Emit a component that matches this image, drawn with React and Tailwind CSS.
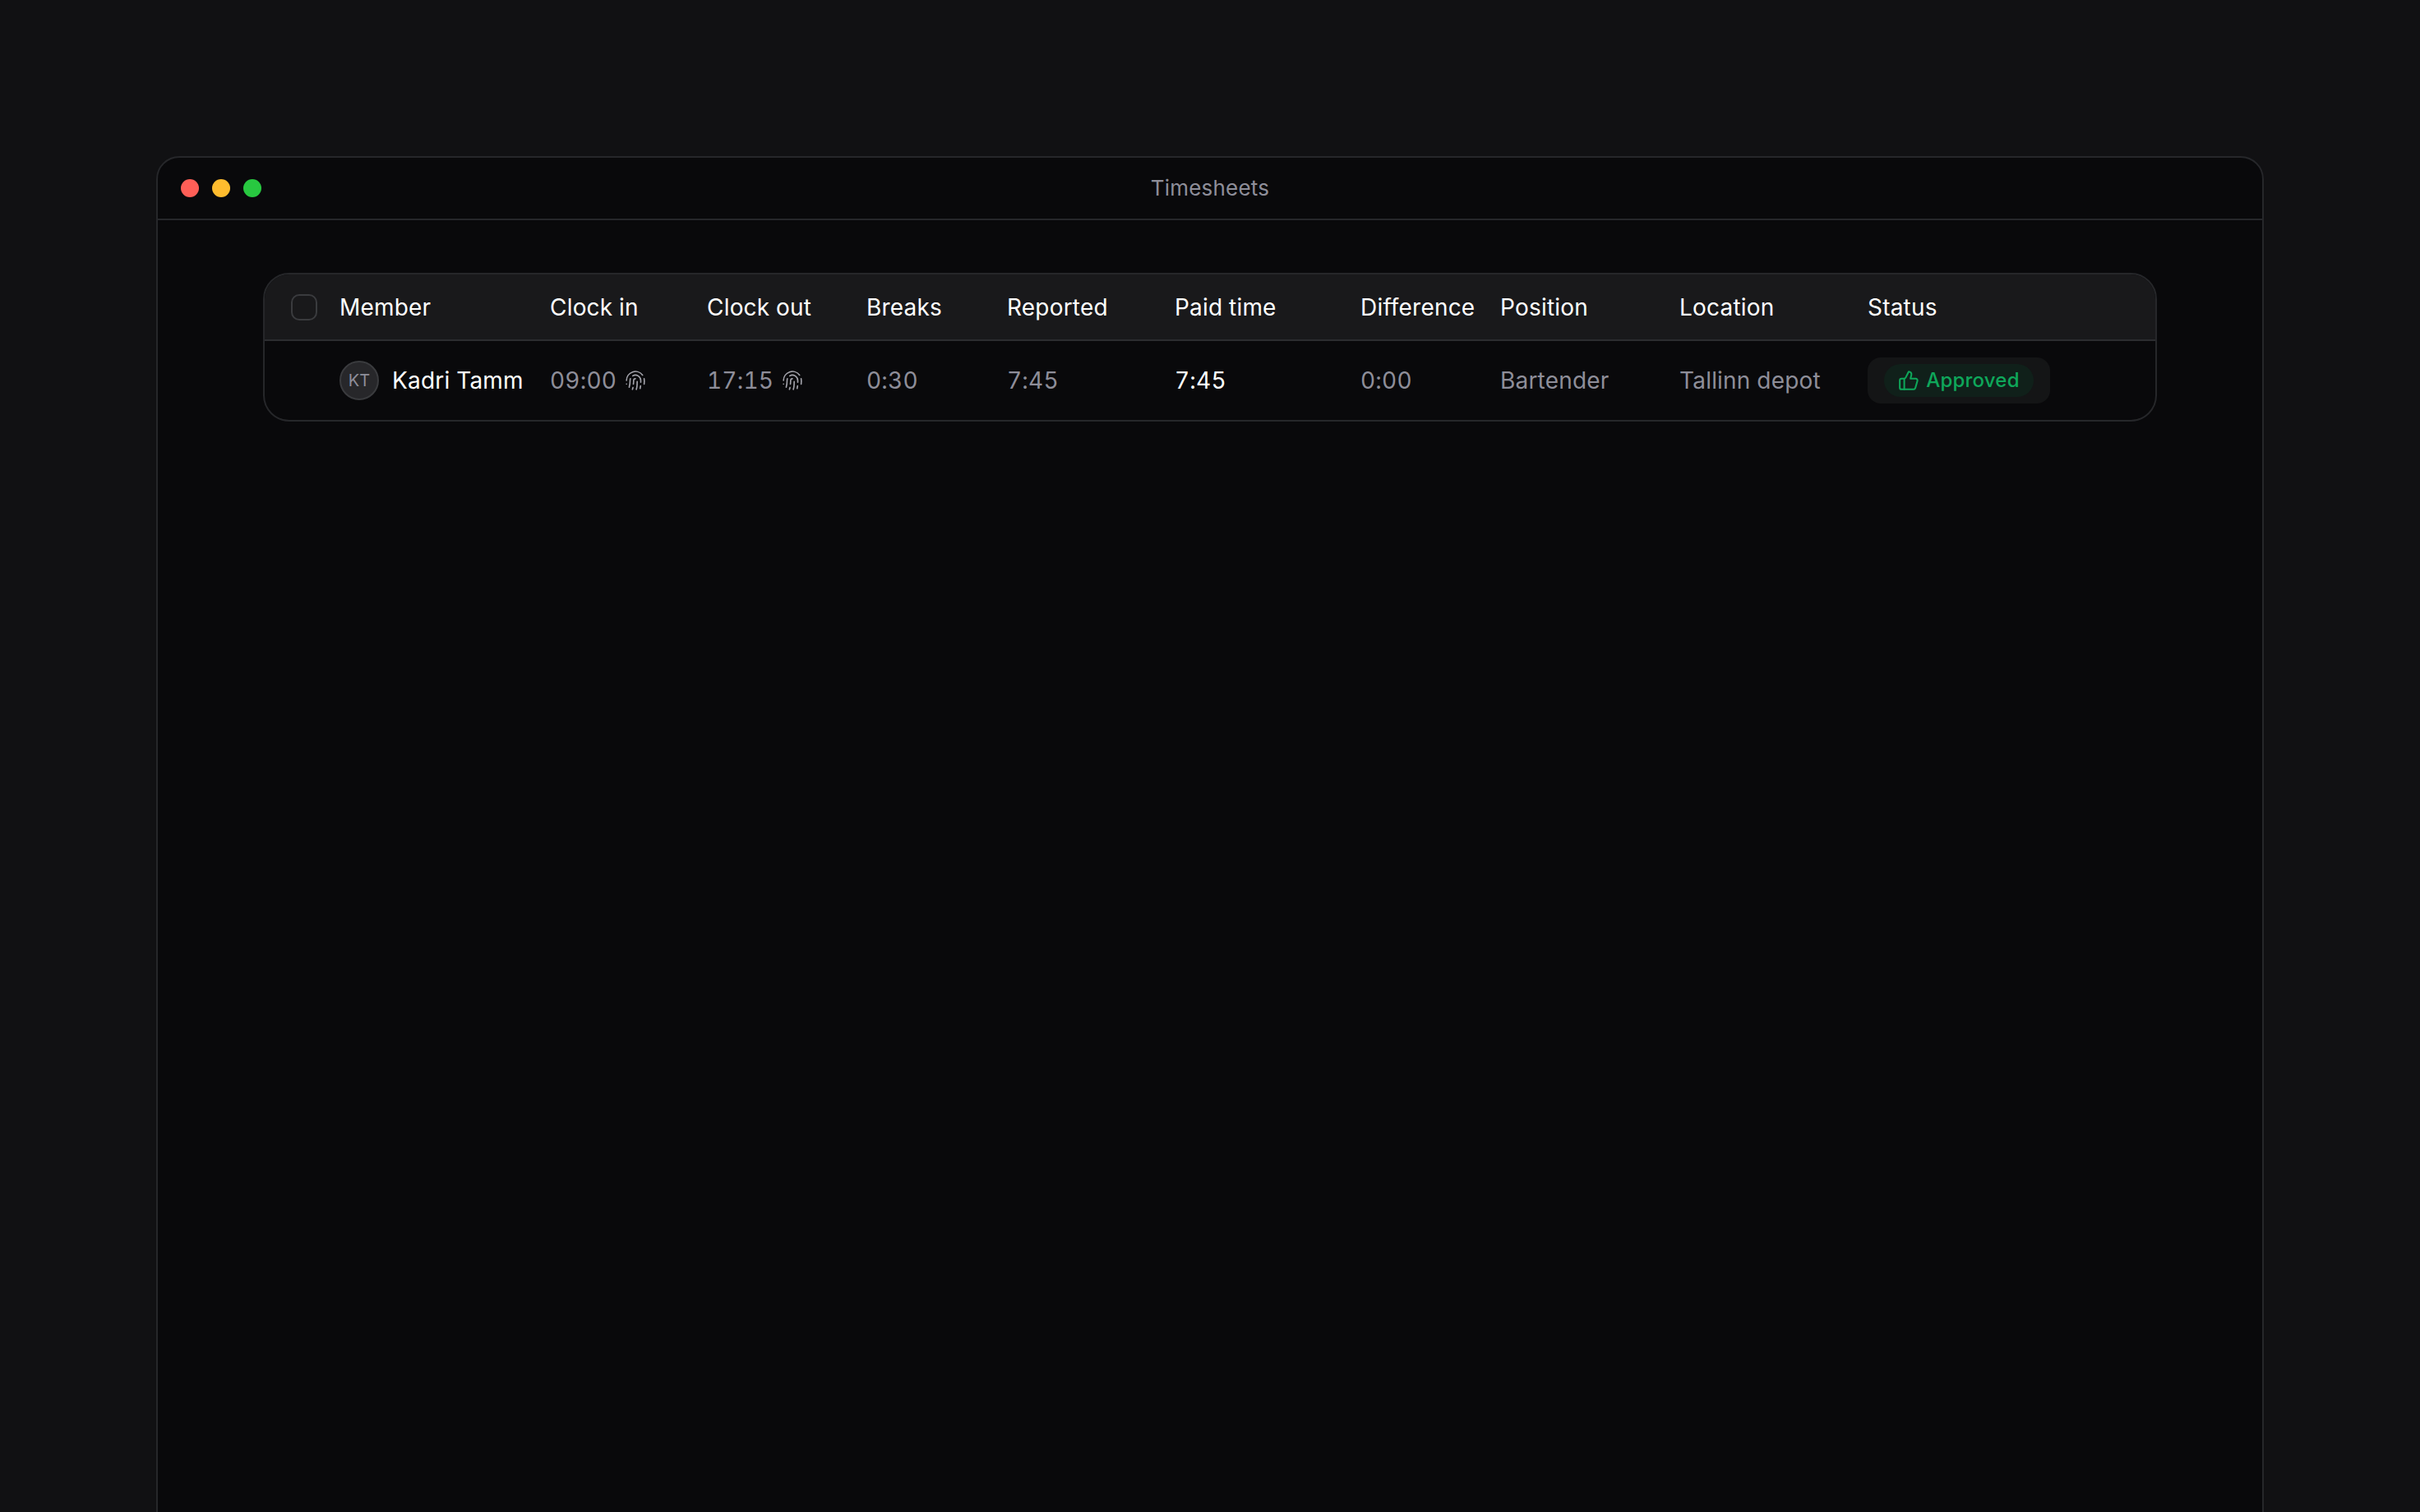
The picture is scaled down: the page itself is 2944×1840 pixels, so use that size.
import React from 'react';
import { Fingerprint, ThumbsUp } from 'lucide-react';

const columns = ['Member', 'Clock in', 'Clock out', 'Breaks', 'Reported', 'Paid time', 'Difference', 'Position', 'Location', 'Status'];
const gridCols = 'grid grid-cols-[91px_256px_191px_194px_171px_204px_226px_170px_218px_229px_1fr] items-center';

const Muted = ({ children }) => <div className="text-[#8e8e99]">{children}</div>;

const TimeCell = ({ value }) => (
  <div className="flex items-center gap-[10px] text-[#8e8e99]">
    <span>{value}</span>
    <Fingerprint size={26} strokeWidth={1.5} className="text-[#a4a4ac]" />
  </div>
);

export default function App() {
  return (
    <div className="h-screen overflow-hidden bg-[#111113] pt-[190px] pl-[190px] font-[Inter,sans-serif] [font-variant-numeric:tabular-nums]">
      <div className="h-[1800px] w-[2564px] rounded-t-[28px] border-2 border-[#26272a] bg-[#09090b]">
        {/* Barra de titulo */}
        <div className="relative flex h-[76px] items-center justify-center border-b-2 border-[#26272a]">
          <div className="absolute left-[28px] flex gap-4">
            <span className="h-[22px] w-[22px] rounded-full bg-[#ff5f57]" />
            <span className="h-[22px] w-[22px] rounded-full bg-[#febc2e]" />
            <span className="h-[22px] w-[22px] rounded-full bg-[#28c840]" />
          </div>
          <span className="-mt-px text-[26px] tracking-[0.2px] text-[#8e8e99]">Timesheets</span>
        </div>

        <div className="px-[128px] pt-[64px]">
          <div className="h-[181px] overflow-hidden rounded-[32px] border-2 border-[#26272a] text-[28px]">
            <div className={`${gridCols} h-[81px] border-b-2 border-[#2c2d30] bg-[#19191b] font-[420] tracking-[0.2px] text-white`}>
              <div className="pl-8">
                <div className="h-8 w-8 rounded-[10px] border-2 border-[#3a3b3e]" />
              </div>
              {columns.map((c) => (
                <div key={c}>{c}</div>
              ))}
            </div>
            <div className={`${gridCols} h-[96px] tracking-[0.2px]`}>
              <div />
              <div className="flex items-center gap-4 text-white">
                <div className="flex h-12 w-12 items-center justify-center rounded-full border-2 border-[#3a3b3e] bg-[#27272a] text-[20px] tracking-normal text-[#8e8e99]">KT</div>
                <span>Kadri Tamm</span>
              </div>
              <TimeCell value="09:00" />
              <TimeCell value="17:15" />
              <Muted>0:30</Muted>
              <Muted>7:45</Muted>
              <div className="text-white">7:45</div>
              <Muted>0:00</Muted>
              <Muted>Bartender</Muted>
              <Muted>Tallinn depot</Muted>
              <div className="flex h-14 w-[222px] items-center justify-center rounded-2xl bg-[#141516]">
                <div className="flex h-10 w-[182px] items-center justify-center gap-2 rounded-full bg-[#10201a] text-[24px] font-[450] tracking-[0.2px] text-[#0ea75a]">
                  <ThumbsUp size={26} strokeWidth={1.9} />
                  <span>Approved</span>
                </div>
              </div>
            </div>
          </div>
        </div>
      </div>
    </div>
  );
}
